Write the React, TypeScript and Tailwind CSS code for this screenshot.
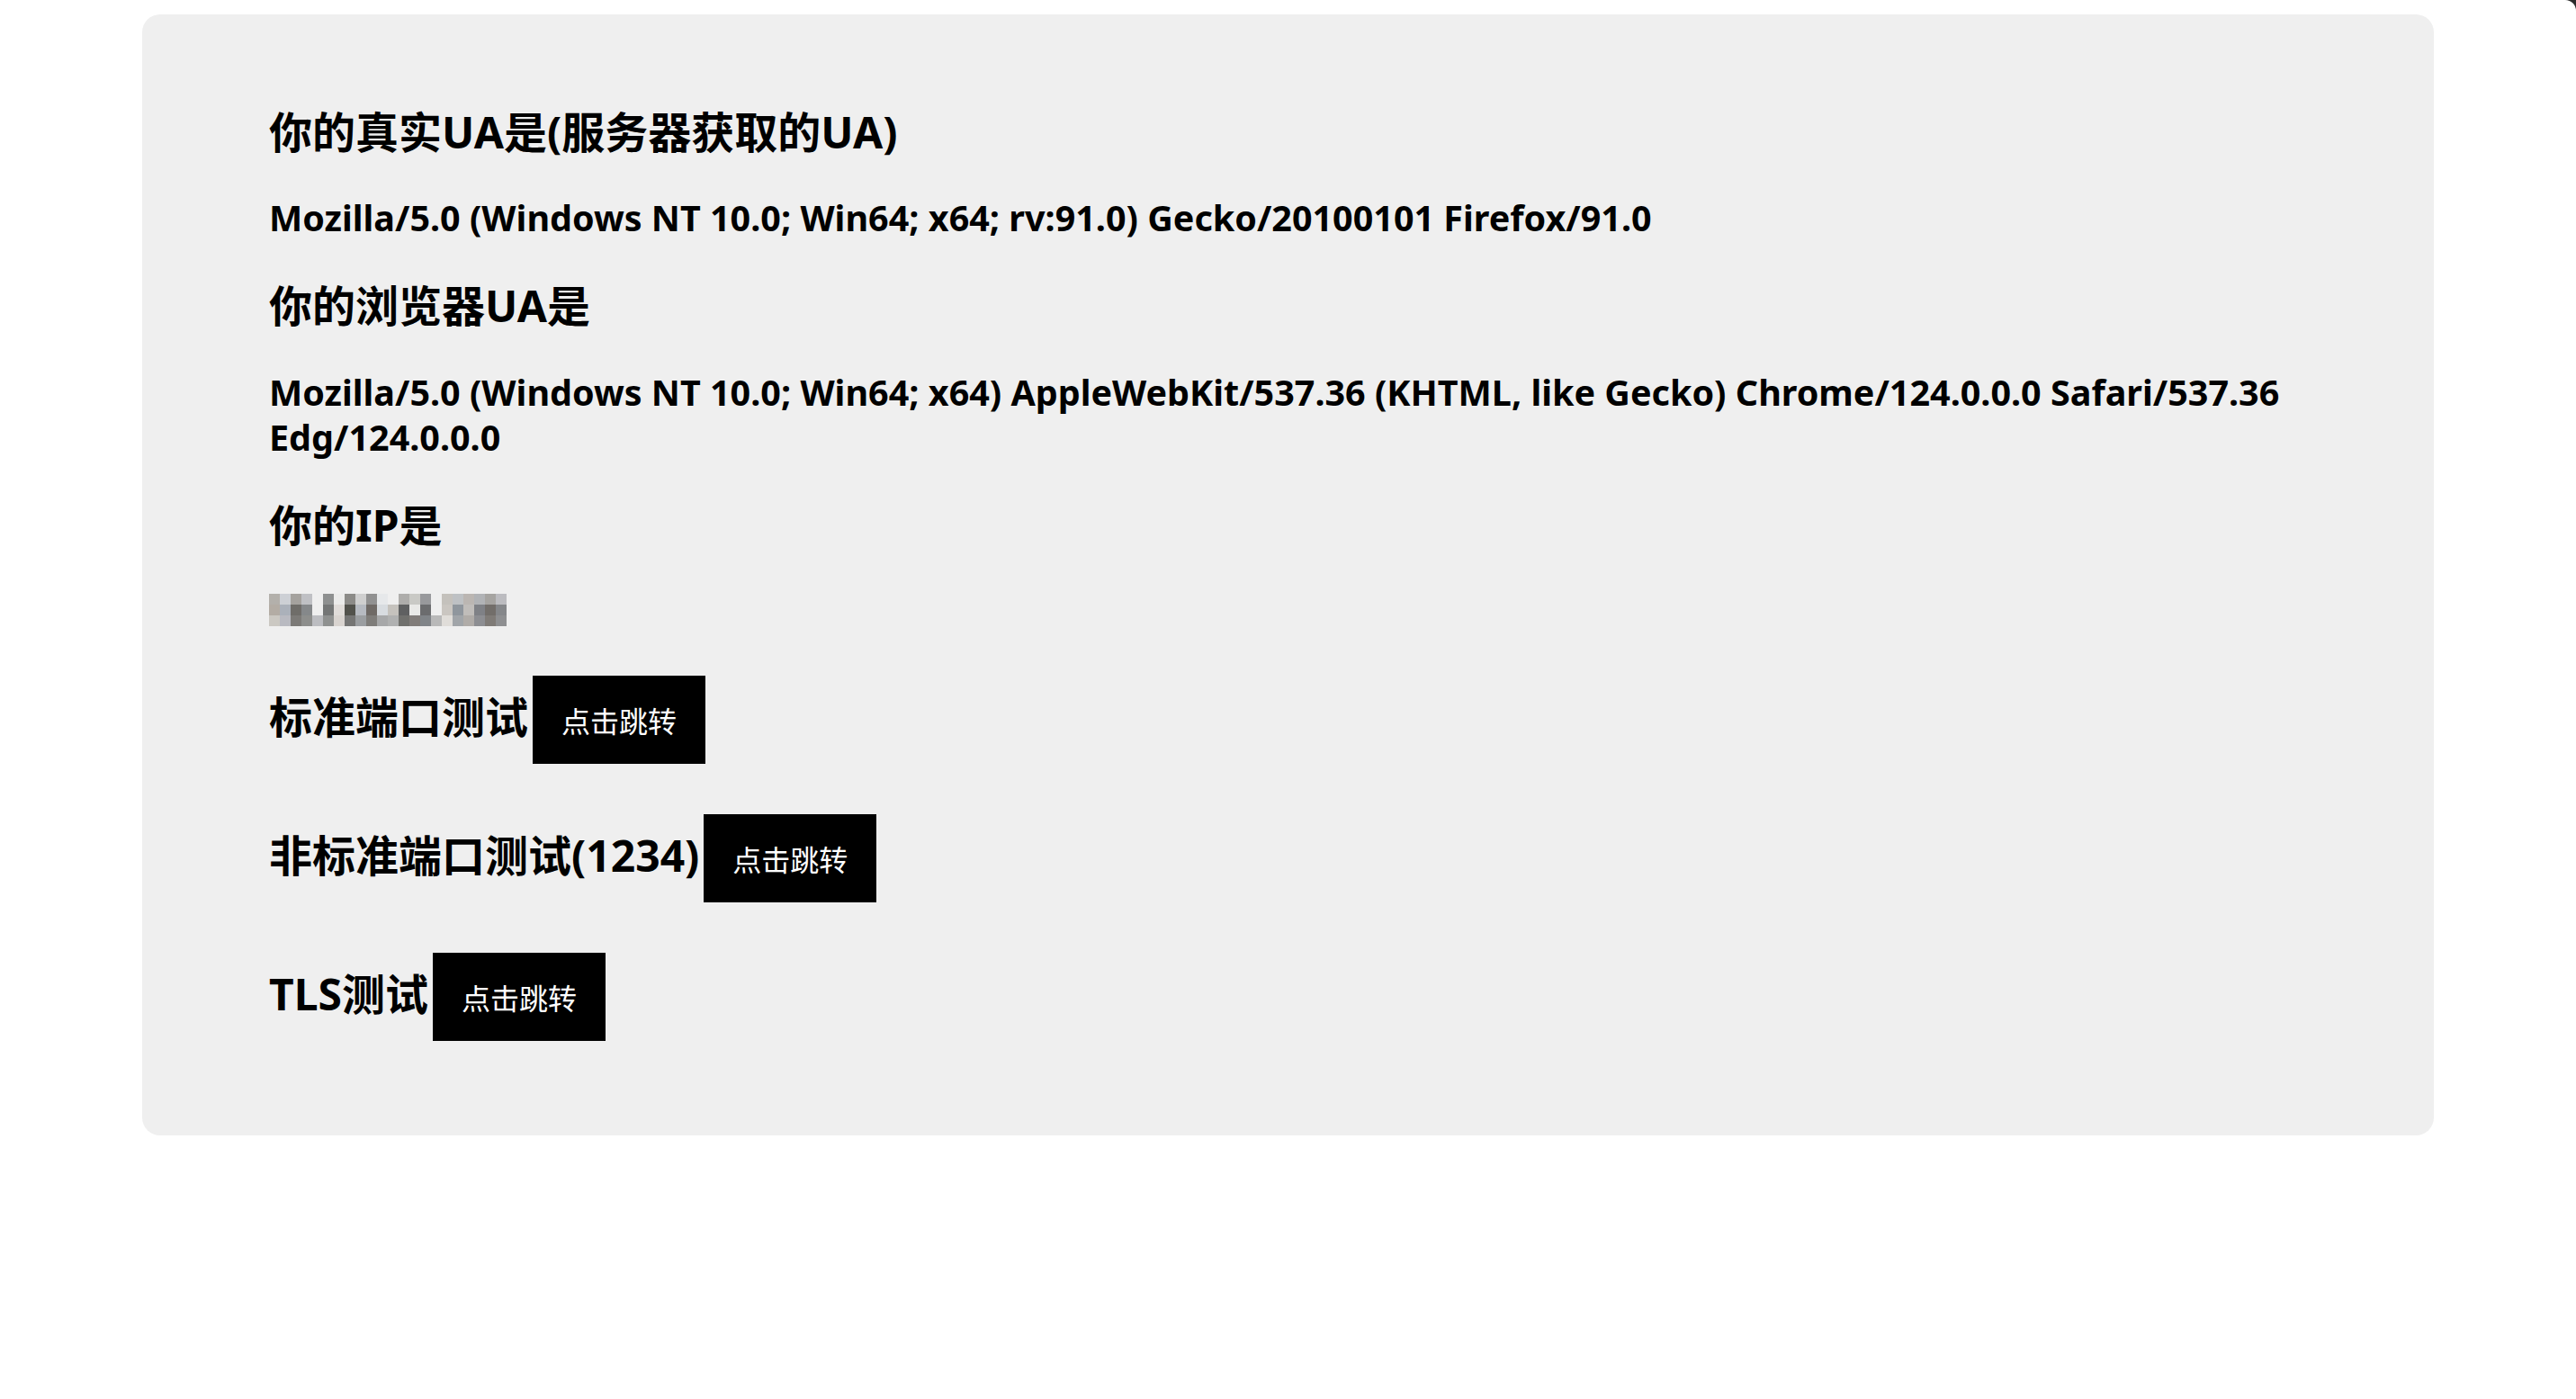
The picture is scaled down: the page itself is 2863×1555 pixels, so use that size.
import React from "react";

const font = "font-['Noto_Sans','Noto_Sans_CJK_SC',sans-serif]";
const headingClass = "text-[48px] font-bold leading-[56px] text-black";
const uaClass = "text-[39.5px] font-bold leading-[50px] text-black";
const jumpBtn =
  "w-[192px] h-[98px] flex items-center justify-center bg-black text-white text-[32px] font-normal font-['Noto_Sans_CJK_SC',sans-serif]";

// blurred IP, 22 x 3 blocks of 12px
const ipPixels = [
  ["#b3b0ab", "#cdd0d5", "#a5a29e", "#bfc0c4", "#efefef", "#8e9090", "#ebebea", "#8c8b88", "#cfcfcf", "#919191", "#e6e8ea", "#efefef", "#aeadab", "#c9c9c5", "#98999c", "#efefef", "#c4c1bc", "#bec1c4", "#bbb6b2", "#b1b3b6", "#a6a4a1", "#bcbcc0"],
  ["#b3aca4", "#abb1ba", "#6f6d69", "#85888a", "#efefef", "#747676", "#e0dcd9", "#52524c", "#b6bac1", "#6f6a66", "#d8dce0", "#c5c2bd", "#5f6061", "#e9e9e7", "#6b6c6e", "#efefef", "#cac6c1", "#8f969d", "#c0bdba", "#7f8186", "#726e6a", "#85878a"],
  ["#cbc8c2", "#b9bac1", "#7c7a77", "#8d8e8c", "#bcbdc1", "#8f9190", "#d9d4d0", "#757574", "#9b9ea1", "#7f7d7a", "#a7a8a9", "#b0b1b1", "#70706d", "#817c79", "#808488", "#b9b9b9", "#e0ddd9", "#a1a5a9", "#b0aca8", "#8d8e92", "#7f7b77", "#8e8f91"],
];

function BlurredIp() {
  return (
    <svg width={264} height={36} viewBox="0 0 264 36" className="block">
      {ipPixels.map((row, r) =>
        row.map((c, i) => <rect key={`${r}-${i}`} x={i * 12} y={r * 12} width={12} height={12} fill={c} />)
      )}
    </svg>
  );
}

function TestRow({ title, first }: { title: string; first?: boolean }) {
  return (
    <div className={`flex items-center gap-[5px] ${first ? "mt-[55px]" : "mt-[56px]"}`}>
      <h3 className={headingClass + " pb-[6px]"}>{title}</h3>
      <button className={jumpBtn}>点击跳转</button>
    </div>
  );
}

export default function App() {
  return (
    <div className={`relative min-h-[1555px] bg-white pt-[16px] ${font}`}>
      {/* window corner */}
      <div className="absolute top-0 right-0 w-[12px] h-[12px] bg-[#2b2b2b] overflow-hidden">
        <div className="absolute left-[-12px] top-0 w-[24px] h-[24px] rounded-full bg-white" />
      </div>

      <div className="mx-auto w-[2547px] rounded-[20px] bg-[#efefef] pl-[141px] pr-[100px] pt-[103px] pb-[105px]">
        <h3 className={headingClass}>你的真实UA是(服务器获取的UA)</h3>
        <p className={uaClass + " mt-[42px]"}>
          Mozilla/5.0 (Windows NT 10.0; Win64; x64; rv:91.0) Gecko/20100101 Firefox/91.0
        </p>

        <h3 className={headingClass + " mt-[45px]"}>你的浏览器UA是</h3>
        <p className={uaClass + " mt-[43px]"}>
          Mozilla/5.0 (Windows NT 10.0; Win64; x64) AppleWebKit/537.36 (KHTML, like Gecko) Chrome/124.0.0.0 Safari/537.36 Edg/124.0.0.0
        </p>

        <h3 className={headingClass + " mt-[45px]"}>你的IP是</h3>
        <div className="mt-[48px]">
          <BlurredIp />
        </div>

        <TestRow title="标准端口测试" first />
        <TestRow title="非标准端口测试(1234)" />
        <TestRow title="TLS测试" />
      </div>
    </div>
  );
}
